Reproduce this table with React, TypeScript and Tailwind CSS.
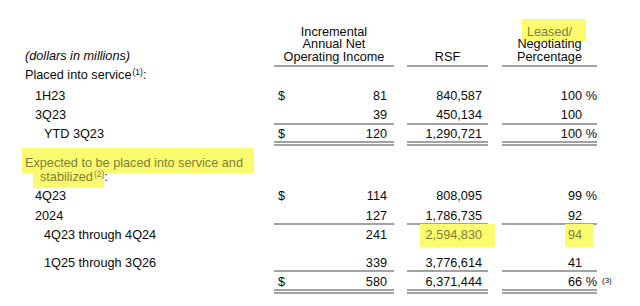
import React from 'react';

const single = 'border-b-2 border-[#a2a2a2]';
const double = 'border-b-[5px] border-double border-[#a2a2a2]';

interface RowProps {
  h: string;
  pt: string;
  pl: string;
  border?: string;
  label: React.ReactNode;
  dollar?: boolean;
  income?: React.ReactNode;
  rsf?: React.ReactNode;
  pct?: React.ReactNode;
  sign?: boolean;
  note?: string;
}

const Row: React.FC<RowProps> = ({ h, pt, pl, border = '', label, dollar, income, rsf, pct, sign, note }) => {
  return (
    <div className={`flex ${h}`}>
      <div className={`w-[274px] whitespace-nowrap ${pt} ${pl}`}>{label}</div>
      <div className={`w-[120px] flex justify-between pl-[4px] pr-[7px] ${pt} ${border}`}>
        <span>{dollar ? '$' : ''}</span>
        <span>{income}</span>
      </div>
      <div className="w-[13px]" />
      <div className={`w-[81px] text-right pr-[6px] ${pt} ${border}`}>{rsf}</div>
      <div className="w-[14px]" />
      <div className={`w-[95px] flex justify-end ${pt} ${border}`}>
        <span>{pct}</span>
        <span className="w-[15px] text-right">{sign ? '%' : ''}</span>
      </div>
      {note && <span className="ml-[5px] pt-[5px] text-[8px] leading-none">{note}</span>}
    </div>
  );
};

const Mark: React.FC<{ className: string; children: React.ReactNode }> = ({ className, children }) => (
  <span className={`inline-block bg-[#fbfb70] text-[#80803a] ${className}`}>{children}</span>
);

export default function App() {
  return (
    <div className="w-[640px] h-[306px] bg-white text-[#0a0a0a] text-[12.7px] leading-[14px] font-['Liberation_Sans',Arial,sans-serif] overflow-hidden">
      {/* header */}
      <div className="flex h-[67px]">
        <div className="w-[274px] flex items-end pl-[25px] pb-[4px] italic">(dollars in millions)</div>
        <div className={`w-[120px] flex flex-col justify-end text-center leading-[12.5px] pb-[2px] ${single}`}>
          <div>Incremental</div>
          <div>Annual Net</div>
          <div>Operating Income</div>
        </div>
        <div className="w-[13px]" />
        <div className={`w-[81px] flex flex-col justify-end text-center leading-[12.5px] pb-[2px] ${single}`}>
          <div>RSF</div>
        </div>
        <div className="w-[14px]" />
        <div className={`w-[95px] flex flex-col justify-end text-center leading-[12.5px] pb-[2px] ${single}`}>
          <div>
            <Mark className="pl-[5px] -ml-[5px] pr-[14px] -mr-[14px] pt-[7px] -mt-[7px] pb-[3px] -mb-[3px]">Leased/</Mark>
          </div>
          <div>Negotiating</div>
          <div>Percentage</div>
        </div>
      </div>

      <Row
        h="h-[21px]"
        pt="pt-[1px]"
        pl="pl-[25px]"
        label={
          <>
            Placed into service<span className="relative -top-[4px] ml-[1px] text-[8.5px]">(1)</span>:
          </>
        }
      />
      <Row h="h-[20px]" pt="pt-[1px]" pl="pl-[35px]" label="1H23" dollar income="81" rsf="840,587" pct="100" sign />
      <Row h="h-[17px]" pt="pt-0" pl="pl-[35px]" border={single} label="3Q23" income="39" rsf="450,134" pct="100" />
      <Row h="h-[21px]" pt="pt-[2px]" pl="pl-[44px]" border={double} label="YTD 3Q23" dollar income="120" rsf="1,290,721" pct="100" sign />

      {/* expected block */}
      <div className="h-[43px] pt-[10px]">
        <div className="pl-[25px]">
          <Mark className="pl-[3px] -ml-[3px] pr-[11px] -mr-[11px] pt-[8px] -mt-[8px] pb-[3px] -mb-[3px]">
            Expected to be placed into service and
          </Mark>
        </div>
        <div className="pl-[40px]">
          <Mark className="pl-[7px] -ml-[7px] pb-[3px] -mb-[3px]">
            stabilized<span className="relative -top-[4px] ml-[1px] text-[8.5px]">(2)</span>
          </Mark>
          :
        </div>
      </div>

      <Row h="h-[20px]" pt="pt-0" pl="pl-[35px]" label="4Q23" dollar income="114" rsf="808,095" pct="99" sign />
      <Row h="h-[16px]" pt="pt-0" pl="pl-[35px]" border={single} label="2024" income="127" rsf="1,786,735" pct="92" />
      <Row
        h="h-[31px]"
        pt="pt-[3px]"
        pl="pl-[44px]"
        label="4Q23 through 4Q24"
        income="241"
        rsf={
          <Mark className="pl-[6px] -ml-[6px] pr-[13px] -mr-[13px] pt-[4px] -mt-[4px] pb-[5px] -mb-[5px]">2,594,830</Mark>
        }
        pct={<Mark className="pl-[3px] -ml-[3px] pr-[11px] -mr-[11px] pt-[4px] -mt-[4px] pb-[5px] -mb-[5px]">94</Mark>}
      />
      <Row h="h-[16px]" pt="pt-0" pl="pl-[44px]" border={single} label="1Q25 through 3Q26" income="339" rsf="3,776,614" pct="41" />
      <Row h="h-[22px]" pt="pt-[3px]" pl="pl-[44px]" border={double} label="" dollar income="580" rsf="6,371,444" pct="66" sign note="(3)" />
    </div>
  );
}
